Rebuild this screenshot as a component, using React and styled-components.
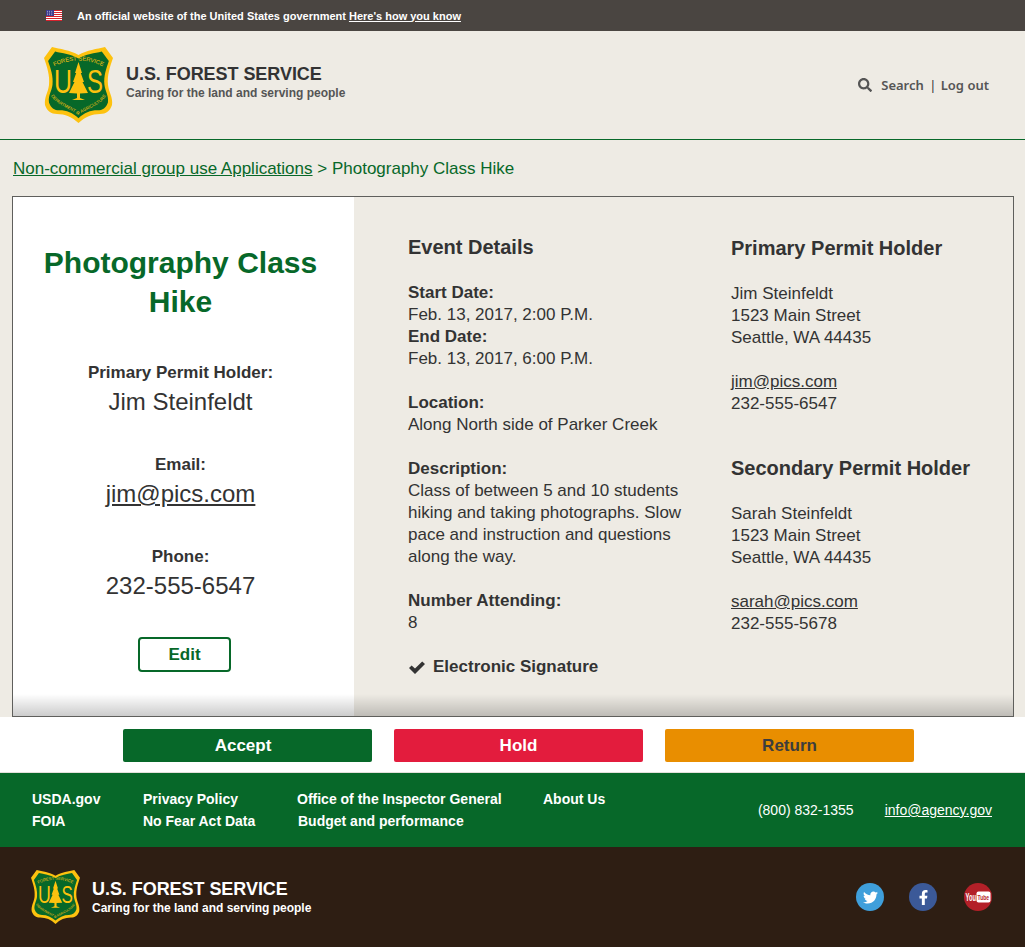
import React from 'react';
import styled, { createGlobalStyle } from 'styled-components';
import { FaFacebookF, FaSearch, FaTwitter } from 'react-icons/fa';

const GlobalStyle = createGlobalStyle`
  html, body {
    margin: 0;
    background: #eeebe4;
    color: #333;
    font-family: "Liberation Sans", Arial, sans-serif;
  }
  * { box-sizing: border-box; }
`;

const Banner = styled.div`
  display: flex;
  align-items: center;
  height: 31px;
  padding-left: 46px;
  background: #4a4541;
  color: #fff;
  font-size: 11px;
  font-weight: 700;
`;

const BannerText = styled.span`
  margin-left: 15px;
  a { color: #fff; margin-left: 3px; }
`;

const Header = styled.header`
  display: flex;
  align-items: center;
  justify-content: space-between;
  height: 109px;
  padding: 0 36px 0 44px;
  border-bottom: 1px solid #076829;
`;

const Brand = styled.div`
  display: flex;
  align-items: center;
  gap: ${(p) => p.$gap}px;
`;

const BrandText = styled.div`
  margin-bottom: ${(p) => p.$lift || 0}px;
  color: ${(p) => p.$color};
  h2 {
    margin: 0;
    font-size: 18px;
    line-height: ${(p) => p.$titleLine}px;
    font-weight: 700;
    letter-spacing: -0.05px;
  }
  p {
    margin: 0;
    font-size: 12px;
    line-height: 16px;
    font-weight: 700;
    color: ${(p) => p.$subColor};
  }
`;

const UserNav = styled.nav`
  display: flex;
  align-items: center;
  color: #555;
  font-family: "Noto Sans", sans-serif;
  font-size: 13px;
  font-weight: 600;
  white-space: pre;
  svg { margin-right: 9px; font-size: 14px; }
  i { font-style: normal; font-weight: 400; color: #333; margin: 0 1px 0 2px; }
`;

const Breadcrumb = styled.div`
  padding: 19px 13px 17px;
  height: 56px;
  font-size: 17px;
  line-height: 20px;
  color: #076829;
  a { color: #076829; }
`;

const Card = styled.section`
  position: relative;
  display: flex;
  height: 521px;
  margin: 0 11px 0 12px;
  border: 1px solid #5f5f5c;
  border-bottom: 0;
  &::after {
    content: "";
    position: absolute;
    left: 0;
    right: 0;
    bottom: 0;
    height: 22px;
    pointer-events: none;
    background: linear-gradient(to bottom, rgba(0, 0, 0, 0), rgba(0, 0, 0, 0.2));
    border-bottom: 1px solid #5f5f5c;
  }
`;

const Summary = styled.aside`
  flex: 0 0 341px;
  padding: 46px 6px 0 0;
  background: #fff;
  text-align: center;
`;

const Title = styled.h1`
  margin: 0 0 41px;
  padding: 0 20px;
  color: #076829;
  font-size: 30px;
  line-height: 39px;
  font-weight: 700;
`;

const Stat = styled.div`
  margin-bottom: 37px;
  strong {
    display: block;
    font-size: 17px;
    line-height: 22px;
  }
  span, a {
    display: block;
    margin-top: 3px;
    font-size: 24px;
    line-height: 30px;
    color: #333;
  }
`;

const EditButton = styled.button`
  display: block;
  width: 93px;
  height: 35px;
  margin: -1px 0 0 125px;
  border: 2px solid #076829;
  border-radius: 4px;
  background: #fff;
  color: #076829;
  font: 700 17px "Liberation Sans", Arial, sans-serif;
`;

const Details = styled.div`
  flex: 0 0 335px;
  padding: 38px 0 0 54px;
`;

const Holders = styled.div`
  flex: 1;
  padding: 39px 0 0 42px;
`;

const SectionTitle = styled.h3`
  margin: 0 0 ${(p) => p.$after}px;
  font-size: 20px;
  line-height: 24px;
  font-weight: 700;
`;

const TextBlock = styled.p`
  margin: 0 0 22px;
  font-size: 17px;
  line-height: 22px;
  a { color: #333; }
`;

const HolderBlock = styled.div`
  margin-bottom: 41px;
`;

const Signature = styled.div`
  display: flex;
  align-items: center;
  gap: 8px;
  padding-left: 1px;
  font-size: 17px;
  line-height: 22px;
  font-weight: 700;
`;

const Actions = styled.div`
  display: flex;
  gap: 22px;
  height: 56px;
  padding: 12px 0 0 123px;
  background: #fff;
  border-bottom: 1px solid #e2e0db;
`;

const ActionButton = styled.button`
  width: 249px;
  height: 33px;
  padding: 0 ${(p) => p.$inset || 0}px 0 0;
  border: 0;
  border-radius: 2px;
  background: ${(p) => p.$bg};
  color: ${(p) => p.$color};
  font: 700 17px "Liberation Sans", Arial, sans-serif;
`;

const LinksFooter = styled.footer`
  display: flex;
  align-items: center;
  justify-content: space-between;
  height: 74px;
  padding: 0 33px 0 32px;
  background: #076829;
  color: #fff;
  font-size: 14px;
  a { color: #fff; }
`;

const LinkGrid = styled.div`
  display: flex;
  font-weight: 700;
  line-height: 22px;
`;

const LinkColumn = styled.div`
  width: ${(p) => p.$width}px;
  display: flex;
  flex-direction: column;
  a { text-decoration: none; }
  a:nth-child(2) { margin-left: ${(p) => p.$nudge || 0}px; }
`;

const Contact = styled.div`
  display: flex;
  gap: 31px;
`;

const BrandFooter = styled.footer`
  display: flex;
  align-items: center;
  justify-content: space-between;
  height: 100px;
  padding: 0 33px 0 31px;
  background: #2e1e13;
`;

const Socials = styled.div`
  display: flex;
  gap: 25px;
`;

const Social = styled.span`
  display: flex;
  align-items: center;
  justify-content: center;
  width: 28px;
  height: 28px;
  margin-left: ${(p) => p.$nudge || 0}px;
  border-radius: 50%;
  background: ${(p) => p.$bg};
  color: #fff;
  font-size: 15px;
`;

// Forest Service badge, the lettering stays real svg text
function Shield({ width, id }) {
  const outline =
    'M8 0 C16 2 26 3 34.5 8 C43 3 53 2 61 0 L69 11 C66 20 63 28 64 38 C65 46 69 50 68 58 C66 64 62 67 56 67 C48 67 41 70 34.5 76 C28 70 21 67 13 67 C7 67 3 64 1 58 C0 50 4 46 5 38 C6 28 3 20 0 11 Z';
  return (
    <svg width={width} viewBox="0 0 69 76" aria-label="U.S. Forest Service shield">
      <path d={outline} fill="#fdc20f" />
      <path d={outline} fill="#076829" transform="translate(4.1 4.4) scale(0.88)" />
      <path id={`${id}-top`} d="M7 21 Q34.5 6 62 21" fill="none" />
      <path id={`${id}-bot`} d="M6 46 C10 58 24 60 34.5 68 C45 60 59 58 63 46" fill="none" />
      <text fontFamily="Liberation Sans" fontSize="5.8" fill="#fdc20f">
        <textPath href={`#${id}-top`} startOffset="50%" textAnchor="middle">FOREST SERVICE</textPath>
      </text>
      <text fontFamily="Liberation Sans" fontSize="4.3" fill="#fdc20f">
        <textPath href={`#${id}-bot`} startOffset="50%" textAnchor="middle">DEPARTMENT OF AGRICULTURE</textPath>
      </text>
      <text x="10" y="46" fontFamily="Liberation Sans" fontSize="33" fill="#fdc20f" textLength="18" lengthAdjust="spacingAndGlyphs">U</text>
      <text x="43" y="46" fontFamily="Liberation Sans" fontSize="33" fill="#fdc20f" textLength="16" lengthAdjust="spacingAndGlyphs">S</text>
      <path
        d="M34.5 15 L38 26 L36.8 26 L40 35 L38.5 35 L44 46 L36 46.5 L36 51 L41 53 L28 53 L33 51 L33 46.5 L25 46 L30.5 35 L29 35 L32.2 26 L31 26 Z"
        fill="#fdc20f"
      />
    </svg>
  );
}

function UsFlag() {
  return (
    <svg width="16" height="11" viewBox="0 0 16 11" aria-label="US flag">
      <rect width="16" height="11" fill="#fff" />
      {[0, 2, 4, 6, 8, 10].map((y) => (
        <rect key={y} y={y} width="16" height="1" fill="#d6222d" />
      ))}
      <rect width="8" height="6" fill="#3b3b8f" />
      {[1, 3.2, 5.4].map((x) =>
        [1.2, 3, 4.8].map((y) => <circle key={`${x}-${y}`} cx={x + 0.4} cy={y} r="0.45" fill="#fff" />)
      )}
    </svg>
  );
}

function CheckMark() {
  return (
    <svg width="16" height="13" viewBox="0 0 16 13" aria-hidden="true">
      <path d="M0 7 L2.6 4.4 L6 7.6 L13.2 0.4 L16 3 L6 13 Z" fill="#333" />
    </svg>
  );
}

function YouTubeMark() {
  return (
    <svg width="28" height="28" viewBox="0 0 28 28" aria-label="YouTube">
      <text x="1.5" y="17.5" fontFamily="Liberation Sans" fontWeight="700" fontSize="10" fill="#fff" textLength="10.5" lengthAdjust="spacingAndGlyphs">You</text>
      <rect x="12.5" y="8.5" width="14" height="11" rx="2" fill="#fff" />
      <text x="13.5" y="17" fontFamily="Liberation Sans" fontWeight="700" fontSize="7.5" fill="#b32028" textLength="11.5" lengthAdjust="spacingAndGlyphs">Tube</text>
    </svg>
  );
}

export default function App() {
  return (
    <>
      <GlobalStyle />
      <Banner>
        <UsFlag />
        <BannerText>
          An official website of the United States government
          <a href="#how">Here's how you know</a>
        </BannerText>
      </Banner>

      <Header>
        <Brand $gap={13}>
          <Shield width={69} id="head" />
          <BrandText $color="#333" $subColor="#555" $titleLine={21} $lift={6}>
            <h2>U.S. FOREST SERVICE</h2>
            <p>Caring for the land and serving people</p>
          </BrandText>
        </Brand>
        <UserNav>
          <FaSearch />
          Search <i>|</i> Log out
        </UserNav>
      </Header>

      <Breadcrumb>
        <a href="#apps">Non-commercial group use Applications</a> &gt; Photography Class Hike
      </Breadcrumb>

      <Card>
        <Summary>
          <Title>Photography Class Hike</Title>
          <Stat>
            <strong>Primary Permit Holder:</strong>
            <span>Jim Steinfeldt</span>
          </Stat>
          <Stat>
            <strong>Email:</strong>
            <a href="#mail">jim@pics.com</a>
          </Stat>
          <Stat>
            <strong>Phone:</strong>
            <span>232-555-6547</span>
          </Stat>
          <EditButton>Edit</EditButton>
        </Summary>

        <Details>
          <SectionTitle $after={23}>Event Details</SectionTitle>
          <TextBlock>
            <strong>Start Date:</strong><br />
            Feb. 13, 2017, 2:00 P.M.<br />
            <strong>End Date:</strong><br />
            Feb. 13, 2017, 6:00 P.M.
          </TextBlock>
          <TextBlock>
            <strong>Location:</strong><br />
            Along North side of Parker Creek
          </TextBlock>
          <TextBlock>
            <strong>Description:</strong><br />
            Class of between 5 and 10 students hiking and taking photographs. Slow pace and instruction and questions along the way.
          </TextBlock>
          <TextBlock>
            <strong>Number Attending:</strong><br />
            8
          </TextBlock>
          <Signature>
            <CheckMark />
            Electronic Signature
          </Signature>
        </Details>

        <Holders>
          <HolderBlock>
            <SectionTitle $after={23}>Primary Permit Holder</SectionTitle>
            <TextBlock>
              Jim Steinfeldt<br />
              1523 Main Street<br />
              Seattle, WA 44435
            </TextBlock>
            <TextBlock>
              <a href="#jim">jim@pics.com</a><br />
              232-555-6547
            </TextBlock>
          </HolderBlock>
          <HolderBlock>
            <SectionTitle $after={23}>Secondary Permit Holder</SectionTitle>
            <TextBlock>
              Sarah Steinfeldt<br />
              1523 Main Street<br />
              Seattle, WA 44435
            </TextBlock>
            <TextBlock>
              <a href="#sarah">sarah@pics.com</a><br />
              232-555-5678
            </TextBlock>
          </HolderBlock>
        </Holders>
      </Card>

      <Actions>
        <ActionButton $bg="#076829" $color="#fff" $inset={9}>Accept</ActionButton>
        <ActionButton $bg="#e31c3d" $color="#fff">Hold</ActionButton>
        <ActionButton $bg="#e98e00" $color="#3d3d3d">Return</ActionButton>
      </Actions>

      <LinksFooter>
        <LinkGrid>
          <LinkColumn $width={111}>
            <a href="#usda">USDA.gov</a>
            <a href="#foia">FOIA</a>
          </LinkColumn>
          <LinkColumn $width={154}>
            <a href="#privacy">Privacy Policy</a>
            <a href="#fear">No Fear Act Data</a>
          </LinkColumn>
          <LinkColumn $width={246} $nudge={1}>
            <a href="#oig">Office of the Inspector General</a>
            <a href="#budget">Budget and performance</a>
          </LinkColumn>
          <LinkColumn $width={80}>
            <a href="#about">About Us</a>
          </LinkColumn>
        </LinkGrid>
        <Contact>
          <span>(800) 832-1355</span>
          <a href="#info">info@agency.gov</a>
        </Contact>
      </LinksFooter>

      <BrandFooter>
        <Brand $gap={12}>
          <Shield width={49} id="foot" />
          <BrandText $color="#fff" $subColor="#fff" $titleLine={22}>
            <h2>U.S. FOREST SERVICE</h2>
            <p>Caring for the land and serving people</p>
          </BrandText>
        </Brand>
        <Socials>
          <Social $bg="#3f9fdb"><FaTwitter /></Social>
          <Social $bg="#3b5998"><FaFacebookF /></Social>
          <Social $bg="#b32028" $nudge={2}><YouTubeMark /></Social>
        </Socials>
      </BrandFooter>
    </>
  );
}
